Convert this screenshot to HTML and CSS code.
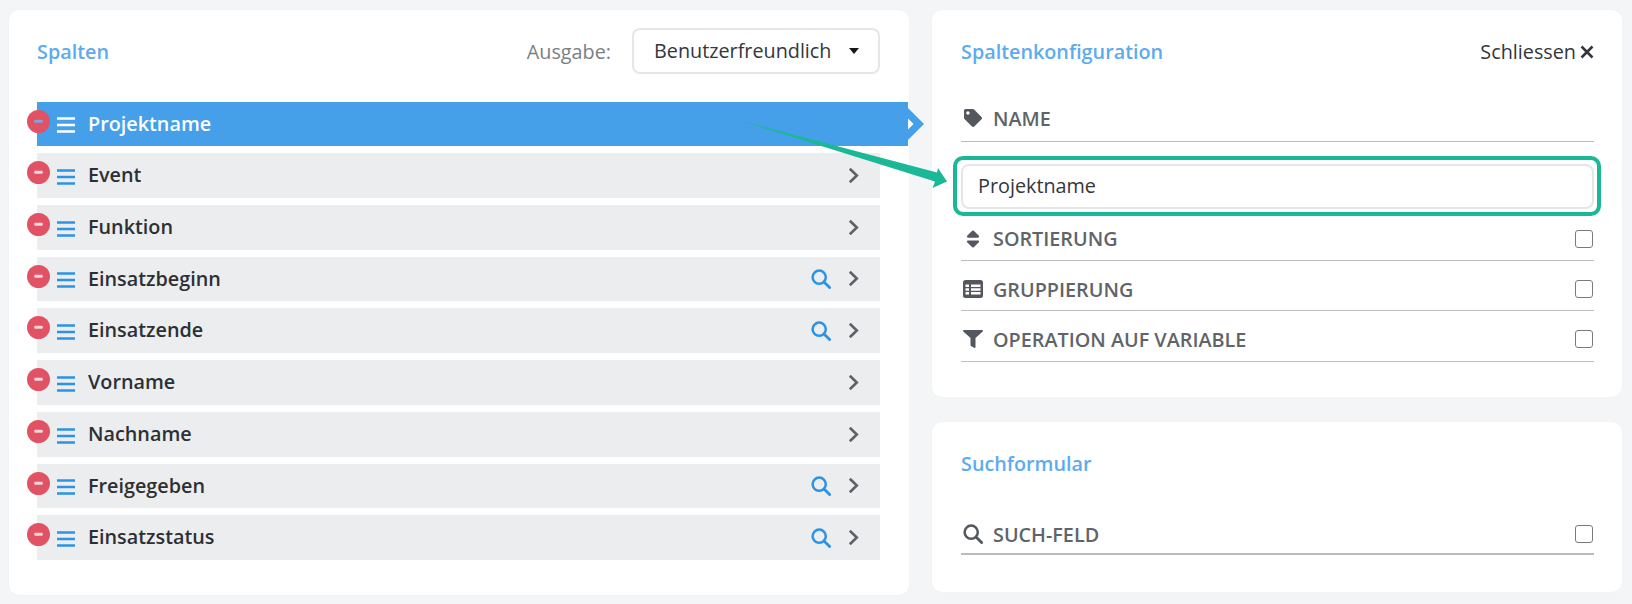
FILE: index.html
```html
<!DOCTYPE html>
<html lang="de">
<head>
<meta charset="utf-8">
<title>Spalten</title>
<link rel="stylesheet" href="styles.css">
</head>
<body>
<svg class="defs" width="0" height="0" aria-hidden="true">
  <symbol id="i-bars" viewBox="0 0 18 16"><path d="M0 1.5h18M0 8h18M0 14.5h18" fill="none" stroke="currentColor" stroke-width="2.4"/></symbol>
  <symbol id="i-search" viewBox="0 0 20 20"><circle cx="8.2" cy="8.2" r="6.6" fill="none" stroke="currentColor" stroke-width="2.5"/><path d="M13 13l5.6 5.6" fill="none" stroke="currentColor" stroke-width="2.8" stroke-linecap="round"/></symbol>
  <symbol id="i-chev" viewBox="0 0 11 17"><path d="M1.8 1.8l7 6.7-7 6.7" fill="none" stroke="currentColor" stroke-width="2.6"/></symbol>
  <symbol id="i-minus" viewBox="0 0 24 24"><circle cx="12" cy="12" r="12" fill="#e05264"/><rect x="7.5" y="10.2" width="9" height="3.2" rx="1.4" fill="currentColor"/></symbol>
</svg>
<main class="page">
  <section class="card card-columns">
    <header class="columns-head">
      <h2 class="title">Spalten</h2>
      <div class="output">
        <span class="output-label">Ausgabe:</span>
        <div class="select"><span>Benutzerfreundlich</span><i class="caret"></i></div>
      </div>
    </header>
    <ul class="rows">
      <li class="row active">
        <svg class="minus"><use href="#i-minus"/></svg>
        <svg class="bars"><use href="#i-bars"/></svg>
        <span class="row-name">Projektname</span>
        <svg class="tab" viewBox="0 0 16 32"><path d="M0 0l16 16L0 32z" fill="#46a0e9"/><path d="M0 10.500l5.500 5.500L0 21.500z" fill="#fff"/></svg>
      </li>
      <li class="row">
        <svg class="minus"><use href="#i-minus"/></svg>
        <svg class="bars"><use href="#i-bars"/></svg>
        <span class="row-name">Event</span>
        <svg class="chev"><use href="#i-chev"/></svg>
      </li>
      <li class="row">
        <svg class="minus"><use href="#i-minus"/></svg>
        <svg class="bars"><use href="#i-bars"/></svg>
        <span class="row-name">Funktion</span>
        <svg class="chev"><use href="#i-chev"/></svg>
      </li>
      <li class="row">
        <svg class="minus"><use href="#i-minus"/></svg>
        <svg class="bars"><use href="#i-bars"/></svg>
        <span class="row-name">Einsatzbeginn</span>
        <svg class="find"><use href="#i-search"/></svg>
        <svg class="chev"><use href="#i-chev"/></svg>
      </li>
      <li class="row">
        <svg class="minus"><use href="#i-minus"/></svg>
        <svg class="bars"><use href="#i-bars"/></svg>
        <span class="row-name">Einsatzende</span>
        <svg class="find"><use href="#i-search"/></svg>
        <svg class="chev"><use href="#i-chev"/></svg>
      </li>
      <li class="row">
        <svg class="minus"><use href="#i-minus"/></svg>
        <svg class="bars"><use href="#i-bars"/></svg>
        <span class="row-name">Vorname</span>
        <svg class="chev"><use href="#i-chev"/></svg>
      </li>
      <li class="row">
        <svg class="minus"><use href="#i-minus"/></svg>
        <svg class="bars"><use href="#i-bars"/></svg>
        <span class="row-name">Nachname</span>
        <svg class="chev"><use href="#i-chev"/></svg>
      </li>
      <li class="row">
        <svg class="minus"><use href="#i-minus"/></svg>
        <svg class="bars"><use href="#i-bars"/></svg>
        <span class="row-name">Freigegeben</span>
        <svg class="find"><use href="#i-search"/></svg>
        <svg class="chev"><use href="#i-chev"/></svg>
      </li>
      <li class="row">
        <svg class="minus"><use href="#i-minus"/></svg>
        <svg class="bars"><use href="#i-bars"/></svg>
        <span class="row-name">Einsatzstatus</span>
        <svg class="find"><use href="#i-search"/></svg>
        <svg class="chev"><use href="#i-chev"/></svg>
      </li>
    </ul>
  </section>
  <div class="side">
    <section class="card card-config">
      <header class="config-head">
        <h2 class="title">Spaltenkonfiguration</h2>
        <span class="close">Schliessen<svg class="close-x" viewBox="0 0 14 14"><path d="M1.500 1.500l11 11M12.500 1.500l-11 11" fill="none" stroke="currentColor" stroke-width="2.6"/></svg></span>
      </header>
      <div class="field field-name">
        <svg class="ficon ficon-tag" viewBox="0 0 512 512"><path d="M0 252.118V48C0 21.49 21.49 0 48 0h204.118a48 48 0 0 1 33.941 14.059l211.882 211.882c18.745 18.745 18.745 49.137 0 67.882L293.823 497.941c-18.745 18.745-49.137 18.745-67.882 0L14.059 286.059A48 48 0 0 1 0 252.118zM112 64c-26.51 0-48 21.49-48 48s21.490 48 48 48 48-21.490 48-48-21.490-48-48-48z"/></svg>
        <span class="field-label">NAME</span>
      </div>
      <div class="input-wrap">
        <input class="input" type="text" value="Projektname">
        <span class="highlight"></span>
      </div>
      <div class="field field-sort">
        <svg class="ficon ficon-sort" viewBox="0 0 320 512"><path d="M41 288h238c21.400 0 32.100 25.900 17 41L177 448c-9.400 9.400-24.600 9.400-33.900 0L24 329c-15.100-15.100-4.400-41 17-41zm255-105L177 64c-9.400-9.400-24.600-9.400-33.900 0L24 183c-15.100 15.100-4.400 41 17 41h238c21.400 0 32.100-25.900 17-41z"/></svg>
        <span class="field-label">SORTIERUNG</span>
        <i class="check"></i>
      </div>
      <div class="field field-group">
        <svg class="ficon" viewBox="0 0 20 18"><path fill-rule="evenodd" d="M2.500 0h15A2.500 2.500 0 0 1 20 2.500v13a2.500 2.500 0 0 1-2.500 2.500h-15A2.500 2.500 0 0 1 0 15.500v-13A2.500 2.500 0 0 1 2.500 0zM2.500 4.500v2.400h3.500V4.500zm5.500 0v2.400h9.500V4.500zM2.500 8.300v2.400h3.500V8.300zm5.500 0v2.400h9.500V8.300zM2.500 12.100v2.400h3.500v-2.400zm5.500 0v2.400h9.500v-2.400z"/></svg>
        <span class="field-label">GRUPPIERUNG</span>
        <i class="check"></i>
      </div>
      <div class="field field-op">
        <svg class="ficon" viewBox="0 0 512 512" preserveAspectRatio="none"><path d="M487.976 0H24.028C2.710 0-8.047 25.866 7.058 40.971L192 225.941V432c0 7.831 3.821 15.170 10.237 19.662l80 55.980C298.020 518.690 320 507.493 320 487.980V225.941l184.947-184.970C520.021 25.896 509.338 0 487.976 0z"/></svg>
        <span class="field-label">OPERATION AUF VARIABLE</span>
        <i class="check"></i>
      </div>
    </section>
    <section class="card card-search">
      <h2 class="title">Suchformular</h2>
      <div class="field field-such">
        <svg class="ficon ficon-search"><use href="#i-search"/></svg>
        <span class="field-label">SUCH-FELD</span>
        <i class="check"></i>
      </div>
    </section>
  </div>
  <svg class="arrow" viewBox="0 0 1632 604" aria-hidden="true"><path d="M740 120.500L937 172.500 938 168 947 181.500 932.500 188 935 181.500z" fill="#1bb897"/></svg>
</main>
</body>
</html>
```
FILE: styles.css
```css
* { box-sizing: border-box; }
html, body { margin: 0; height: 100%; }
body {
  background: #f4f5f7;
  font-family: "Open Sans", "Liberation Sans", sans-serif;
  overflow: hidden;
}
.defs { position: absolute; }
.page {
  position: relative;
  display: flex;
  align-items: flex-start;
  gap: 23px;
  height: 604px;
  padding: 10px 10px 0 9px;
}
.card {
  background: #fff;
  border-radius: 10px;
  box-shadow: 0 0 2px rgba(0, 0, 0, .04);
}
.title {
  margin: 0;
  font-size: 19.800px;
  font-weight: 600;
  line-height: 24px;
  color: #5dabef;
}
.card-columns {
  width: 900px;
  height: 585px;
  padding: 18px 29px 0 28px;
}
.columns-head {
  display: flex;
  align-items: center;
  justify-content: space-between;
  height: 46px;
}
.columns-head .title { margin-top: 1px; }
.output { display: flex; align-items: center; gap: 21px; }
.output-label { font-size: 19.800px; color: #7b8085; }
.select {
  display: flex;
  align-items: center;
  width: 248px;
  height: 46px;
  padding: 0 19px 2px 20px;
  justify-content: space-between;
  border: 2px solid #e6e6e6;
  border-radius: 8px;
  font-size: 19.800px;
  color: #33373b;
}
.caret {
  width: 0;
  height: 0;
  margin-top: 1px;
  border: 5px solid transparent;
  border-top: 6px solid #15171a;
  border-bottom: 0;
}
.rows { list-style: none; margin: 28px 0 0; padding: 0; }
.row {
  position: relative;
  display: flex;
  align-items: center;
  height: 44.750px;
  margin-bottom: 7px;
  padding: 0 21px 0 20px;
  background: #ecedef;
  color: #2c3035;
  font-size: 19.800px;
  font-weight: 600;
}
.row.active {
  height: 44px;
  margin-right: -28px;
  background: #46a0e9;
  color: #fff;
}
.minus {
  position: absolute;
  left: -10.500px;
  top: 8px;
  width: 23px;
  height: 23px;
  color: #f3d6da;
}
.row.active .minus { color: #7aa5dd; }
.bars {
  flex: none;
  width: 18px;
  height: 16px;
  margin-top: 3px;
  color: #2c92e6;
}
.row.active .bars { color: #fff; margin-top: 1px; }
.row-name { flex: 1; margin-left: 13px; margin-top: -1.500px; }
.find { width: 20px; height: 20px; margin-right: 17px; margin-top: 1px; color: #2c92e6; }
.chev { width: 11px; height: 17px; color: #5d6268; }
.tab {
  position: absolute;
  left: 100%;
  top: 6px;
  width: 16px;
  height: 32px;
}
.side { display: flex; flex-direction: column; gap: 25px; width: 690px; }
.card-config { height: 387px; padding: 18px 28px 0 29px; }
.config-head {
  display: flex;
  align-items: center;
  justify-content: space-between;
  height: 46px;
}
.config-head .title { margin-top: 1px; }
.close {
  display: flex;
  align-items: center;
  gap: 4px;
  font-size: 19.800px;
  color: #33373b;
}
.close-x { width: 14px; height: 14px; margin-top: 2px; }
.field {
  display: flex;
  align-items: center;
  height: 49.500px;
  padding-top: 4px;
  border-bottom: 1.500px solid #b9bdc1;
  color: #5f6469;
}
.field-name { height: 68px; padding-top: 21px; }
.ficon { flex: none; width: 20px; height: 18px; margin-left: 2px; fill: #54585e; color: #54585e; }
.ficon-sort { height: 22px; }
.ficon-search { height: 20px; }
.field-label { flex: 1; margin-left: 10px; font-size: 19.800px; font-weight: 600; }
.check {
  flex: none;
  width: 18px;
  height: 18px;
  margin-right: 1px;
  border: 1.500px solid #777b80;
  border-radius: 3px;
}
.input-wrap { position: relative; height: 45px; margin-top: 22px; margin-bottom: 2px; }
.input {
  display: block;
  width: 100%;
  height: 45px;
  padding: 0 15px 3px;
  border: 2px solid #e6e6e6;
  border-radius: 8px;
  background: #fff;
  font: 400 19.800px "Open Sans", sans-serif;
  color: #33373b;
  outline: 0;
}
.highlight {
  position: absolute;
  inset: -8px -7px -7px -8px;
  border: 4px solid #1bb897;
  border-radius: 10px;
  pointer-events: none;
}
.field-sort { height: 50px; padding-top: 6px; }
.field-group { padding-top: 8px; }
.field-op { height: 51px; padding-top: 7px; }
.card-search { height: 170px; padding: 30px 28px 0 29px; }
.field-such { height: 79px; padding-top: 39px; border-bottom-width: 2px; }
.arrow {
  position: absolute;
  left: 0;
  top: 0;
  width: 1632px;
  height: 604px;
  pointer-events: none;
}
```
